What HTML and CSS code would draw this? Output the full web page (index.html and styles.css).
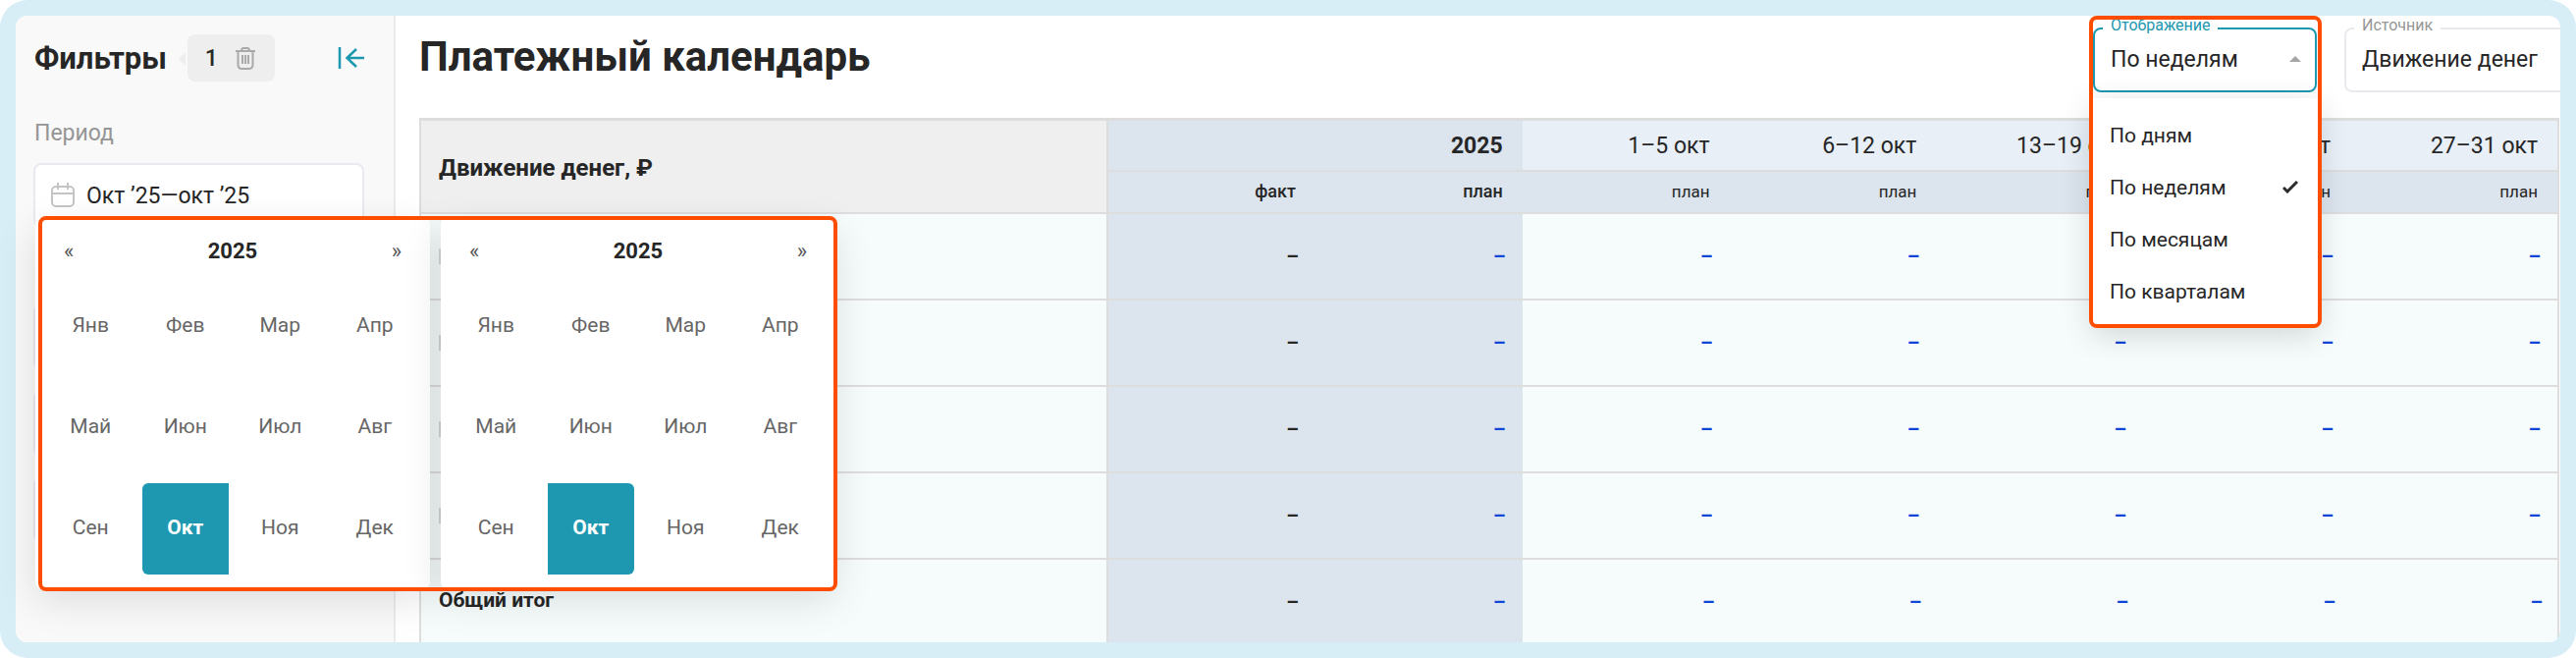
FILE: index.html
```html
<!DOCTYPE html>
<html lang="ru">
<head>
<meta charset="utf-8">
<title>Платежный календарь</title>
<link rel="stylesheet" href="styles.css">
</head>
<body>
<div class="frame">
  <div class="app">
    <aside class="sidebar">
      <header class="sidebar-head">
        <h2 class="sidebar-title">Фильтры</h2>
        <button class="chip" type="button" aria-label="Сбросить фильтры: 1">
          <span>1</span>
          <svg width="20" height="24" viewBox="0 0 20 24" fill="none" stroke="#a9a9a9" stroke-width="2"><path d="M0 5h20M6 5q0-3 2-3h4q2 0 2 3M2.500 6v13q0 4 4 4h7q4 0 4-4V6M7 9v9M10 9v9M13 9v9"/></svg>
        </button>
        <button class="collapse" type="button" aria-label="Свернуть панель">
          <svg width="28" height="24" viewBox="0 0 28 24" fill="none" stroke="#1e97b0" stroke-width="2.500"><path d="M3 1v22M28 12H10M20 3l-9.500 9 9.500 9"/></svg>
        </button>
      </header>
      <label class="filter-label" for="period">Период</label>
      <div class="filter-box">
        <svg width="24" height="26" viewBox="0 0 24 26" fill="none" stroke="#c4c4c4" stroke-width="2"><rect x="1" y="4" width="22" height="20" rx="4"/><path d="M1 11h22M7 0v7M17 0v7"/></svg>
        <input id="period" class="filter-input" type="text" value="Окт ’25—окт ’25" readonly>
      </div>
      <div class="filter-rest">
        <div class="filter-box"></div>
        <div class="filter-box"></div>
        <div class="filter-box"></div>
      </div>
    </aside>

    <main class="main">
      <header class="toolbar">
        <h1 class="title">Платежный календарь</h1>
        <div class="field field--active">
          <span class="field-label" id="view-label">Отображение</span>
          <button class="field-control" type="button" aria-haspopup="listbox" aria-expanded="true" aria-labelledby="view-label view-value">
            <span id="view-value">По неделям</span>
            <svg width="12" height="6" viewBox="0 0 12 6"><path d="M0 6l6-6 6 6z" fill="#a6a6a6"/></svg>
          </button>
          <div class="menu" role="listbox" aria-labelledby="view-label">
            <button class="menu-item" type="button" role="option">По дням</button>
            <button class="menu-item" type="button" role="option" aria-selected="true">По неделям
              <svg width="16" height="13" viewBox="0 0 16 13" fill="none" stroke="#2b2b2b" stroke-width="3"><path d="M1 7l4 4L15 1"/></svg>
            </button>
            <button class="menu-item" type="button" role="option">По месяцам</button>
            <button class="menu-item" type="button" role="option">По кварталам</button>
          </div>
        </div>
        <div class="field field--source">
          <label class="field-label" for="source">Источник</label>
          <select class="field-control" id="source"><option>Движение денег</option></select>
        </div>
      </header>

      <table class="grid">
        <colgroup><col class="col-name"><col span="7"></colgroup>
        <thead>
          <tr class="head-periods">
            <th class="name-head" rowspan="2" scope="col">Движение денег, ₽</th>
            <th class="year" colspan="2" scope="colgroup">2025</th>
            <th scope="col">1–5 окт</th><th scope="col">6–12 окт</th><th scope="col">13–19 окт</th><th scope="col">20–26 окт</th><th scope="col">27–31 окт</th>
          </tr>
          <tr class="head-kinds">
            <th class="year" scope="col">факт</th><th class="year" scope="col">план</th>
            <th scope="col">план</th><th scope="col">план</th><th scope="col">план</th><th scope="col">план</th><th scope="col">план</th>
          </tr>
        </thead>
        <tbody>
          <tr><th scope="row"><span class="expander"></span></th><td class="year fact">–</td><td class="year">–</td><td>–</td><td>–</td><td>–</td><td>–</td><td>–</td></tr>
          <tr><th scope="row"><span class="expander"></span></th><td class="year fact">–</td><td class="year">–</td><td>–</td><td>–</td><td>–</td><td>–</td><td>–</td></tr>
          <tr><th scope="row"><span class="expander"></span></th><td class="year fact">–</td><td class="year">–</td><td>–</td><td>–</td><td>–</td><td>–</td><td>–</td></tr>
          <tr><th scope="row"><span class="expander"></span></th><td class="year fact">–</td><td class="year">–</td><td>–</td><td>–</td><td>–</td><td>–</td><td>–</td></tr>
        </tbody>
        <tfoot>
          <tr><th scope="row">Общий итог</th><td class="year fact">–</td><td class="year">–</td><td>–</td><td>–</td><td>–</td><td>–</td><td>–</td></tr>
        </tfoot>
      </table>
    </main>
  </div>

  <div class="picker">
    <section class="picker-panel">
      <header class="picker-head"><button type="button" aria-label="Предыдущий год">«</button><strong>2025</strong><button type="button" aria-label="Следующий год">»</button></header>
      <div class="months">
        <button type="button">Янв</button><button type="button">Фев</button><button type="button">Мар</button><button type="button">Апр</button>
        <button type="button">Май</button><button type="button">Июн</button><button type="button">Июл</button><button type="button">Авг</button>
        <button type="button">Сен</button><button type="button" class="selected selected--start">Окт</button><button type="button">Ноя</button><button type="button">Дек</button>
      </div>
    </section>
    <section class="picker-panel">
      <header class="picker-head"><button type="button" aria-label="Предыдущий год">«</button><strong>2025</strong><button type="button" aria-label="Следующий год">»</button></header>
      <div class="months">
        <button type="button">Янв</button><button type="button">Фев</button><button type="button">Мар</button><button type="button">Апр</button>
        <button type="button">Май</button><button type="button">Июн</button><button type="button">Июл</button><button type="button">Авг</button>
        <button type="button">Сен</button><button type="button" class="selected selected--end">Окт</button><button type="button">Ноя</button><button type="button">Дек</button>
      </div>
    </section>
  </div>
</div>
</body>
</html>
```

FILE: styles.css
```css
*, *::before, *::after { box-sizing: border-box; }

body {
  margin: 0;
  background: #fff;
  color: #262626;
  font-family: Roboto, "Liberation Sans", sans-serif;
  font-size: 23px;
}

button, input, select {
  margin: 0;
  padding: 0;
  border: 0;
  background: none;
  color: inherit;
  font: inherit;
}

svg { display: block; flex: none; }

.frame {
  position: relative;
  height: 100vh;
  padding: 16px;
  border-radius: 28px;
  background: #d8eef7;
}

.app {
  display: flex;
  height: 100%;
  border-radius: 12px;
  background: #fff;
  overflow: hidden;
}

/* Sidebar */
.sidebar {
  flex: none;
  width: 387px;
  padding: 19px 30px 0 18px;
  border-right: 2px solid #ebebeb;
  background: #f9f9f9;
}

.sidebar-head { display: flex; align-items: center; height: 48px; }

.sidebar-title { margin: 0 21px 0 1px; font-size: 31px; font-weight: 700; }

.chip {
  position: relative;
  display: flex;
  align-items: center;
  gap: 18px;
  height: 48px;
  padding: 0 20px 0 18px;
  border-radius: 8px;
  background: #eee;
  font-weight: 500;
}

.chip::before {
  content: "";
  position: absolute;
  left: -9px;
  top: 18px;
  border: 7px solid transparent;
  border-left: 0;
  border-right-color: #eee;
}

.collapse { margin-left: auto; }

.filter-label { display: block; margin: 37px 0 0 1px; line-height: 32px; color: #959595; }

.filter-box {
  display: flex;
  align-items: center;
  gap: 12px;
  height: 66px;
  padding: 0 16px;
  border: 2px solid #e8eaf0;
  border-radius: 8px;
  background: #fff;
}

.filter-label + .filter-box { margin-top: 14px; }

.filter-input { flex: 1; min-width: 0; }

.filter-rest { display: grid; gap: 22px; margin-top: 78px; }

/* Main area */
.main { flex: 1; min-width: 0; padding: 0 1px 0 24px; }

.toolbar {
  display: flex;
  align-items: flex-start;
  gap: 28px;
  height: 104px;
  padding-top: 12px;
}

.title { margin: 4px auto 0 0; font-size: 42px; font-weight: 700; line-height: 52px; }

.field {
  position: relative;
  flex: none;
  width: 228px;
  height: 66px;
  border: 2px solid #e8eaee;
  border-radius: 8px;
}

.field--active { border-color: #1e97b0; }

.field--source { width: 240px; margin-right: -21px; }

.field-label {
  position: absolute;
  left: 8px;
  top: -14px;
  padding: 0 8px;
  background: #fff;
  color: #959595;
  font-size: 16px;
  line-height: 20px;
}

.field--active .field-label { color: #1e97b0; }

.field-control {
  display: flex;
  align-items: center;
  justify-content: space-between;
  width: 100%;
  height: 100%;
  padding: 0 14px 2px 16px;
  appearance: none;
}

.menu {
  position: absolute;
  z-index: 2;
  left: -3px;
  right: -3px;
  top: 70px;
  padding: 11px 0 9px;
  border-radius: 4px;
  background: #fff;
  box-shadow: 0 8px 32px rgba(0, 0, 0, .16);
}

.menu-item {
  display: flex;
  align-items: center;
  justify-content: space-between;
  width: 100%;
  height: 53px;
  padding: 0 20px 0 18px;
  font-size: 21px;
}

.field--active::after {
  content: "";
  position: absolute;
  z-index: 3;
  left: -6px;
  top: -14px;
  width: 237px;
  height: 318px;
  border: 4px solid #ff4d00;
  border-radius: 8px;
  pointer-events: none;
}

/* Table */
.grid {
  width: 100%;
  table-layout: fixed;
  border: 2px solid #ddd;
  border-width: 3px 2px 0;
  border-collapse: separate;
  border-spacing: 0;
}

.col-name { width: 700px; }

.grid th, .grid td {
  padding: 0 20px 0 18px;
  border-bottom: 2px solid #ddd;
  text-align: right;
}

.grid thead th { background: #dce4ee; font-weight: 400; }

.grid .head-periods th { height: 52px; background: #e8eff7; }

.grid .head-kinds th { height: 43px; padding-bottom: 2px; font-size: 17px; }

.grid thead .year, .grid .head-periods .name-head { font-weight: 700; }

.grid .head-kinds .year { font-size: 18px; font-weight: 500; }

.grid .head-periods .year { background: #dce4ee; }

.grid .head-periods .name-head { padding-top: 2px; background: #efefef; font-size: 24px; }

.grid th:first-child:not(.year) { border-right: 2px solid #ddd; text-align: left; }

.grid tbody tr, .grid tfoot tr { height: 88px; background: #f6fcfc; }

.grid td { padding-right: 17px; color: #1046d8; font-weight: 700; font-size: 20px; }

.grid td.year { background: #dce4ee; }

.grid td.fact { color: #262626; }

.grid tfoot th { padding-bottom: 4px; font-size: 21px; font-weight: 700; }

.grid tfoot td:not(.year) { padding-right: 15px; }

.expander { display: block; width: 16px; height: 16px; border: 2px solid #d4d8d8; }

/* Month range picker */
.picker {
  position: absolute;
  z-index: 4;
  left: 36px;
  top: 222px;
  display: grid;
  grid-template-columns: 1fr 1fr;
  gap: 11px;
  width: 815px;
}

.picker::after {
  content: "";
  position: absolute;
  inset: -2px -2px -3px 3px;
  border: 4px solid #ff4d00;
  border-radius: 8px;
  pointer-events: none;
}

.picker-panel {
  padding: 0 8px 9px;
  border-radius: 6px;
  background: #fff;
  box-shadow: 0 12px 40px rgba(0, 0, 0, .12);
}

.picker-head {
  display: flex;
  align-items: center;
  justify-content: space-between;
  height: 59px;
  padding: 8px 21px 0;
  font-size: 22px;
}

.picker-head strong { font-weight: 700; }

.picker-head button { color: #555; }

.months { display: grid; grid-template-columns: repeat(4, 1fr); grid-auto-rows: 103px; }

.months button { margin: 5px 4px; padding-bottom: 4px; color: #666; font-size: 21px; }

.months .selected { background: #1e97b0; color: #fff; font-weight: 700; }

.months .selected--start { border-radius: 6px 0 0 6px; }

.months .selected--end { border-radius: 0 6px 6px 0; }
```
